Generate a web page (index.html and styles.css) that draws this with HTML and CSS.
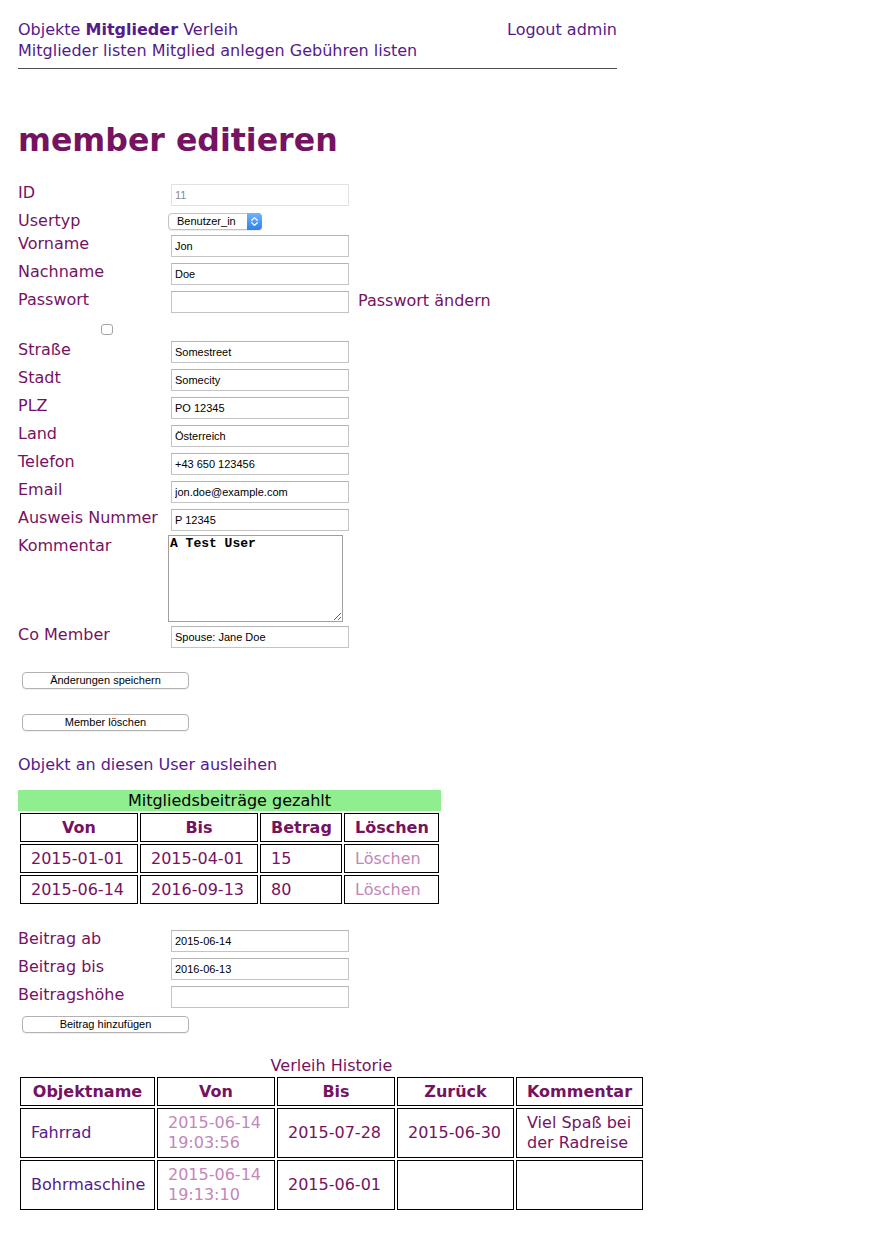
FILE: index.html
```html
<!DOCTYPE html>
<html lang="de">
<head>
<meta charset="utf-8">
<title>member editieren</title>
<link rel="stylesheet" href="styles.css">
</head>
<body>
<div class="page">
  <div class="topbar">
    <div class="nav-row">
      <div class="main-nav"><a href="#">Objekte</a> <a href="#" class="current">Mitglieder</a> <a href="#">Verleih</a></div>
      <a href="#">Logout admin</a>
    </div>
    <div class="sub-nav"><a href="#">Mitglieder listen</a> <a href="#">Mitglied anlegen</a> <a href="#">Gebühren listen</a></div>
  </div>

  <h1 class="title">member editieren</h1>

  <form class="member-form">
    <div class="row"><label>ID</label><input type="text" value="11" disabled class="field"></div>
    <div class="row row-select"><label>Usertyp</label>
      <span class="select">
        <select><option>Benutzer_in</option></select>
        <span class="select-btn"><svg width="15" height="17" viewBox="0 0 15 17"><path d="M4.8 7.2 L7.5 4.6 L10.2 7.2 M4.8 9.8 L7.5 12.4 L10.2 9.8" fill="none" stroke="#fff" stroke-width="1.3" stroke-linecap="round" stroke-linejoin="round"/></svg></span>
      </span>
    </div>
    <div class="row"><label>Vorname</label><input type="text" value="Jon" class="field"></div>
    <div class="row"><label>Nachname</label><input type="text" value="Doe" class="field"></div>
    <div class="row"><label>Passwort</label><input type="password" class="field"><span class="hint">Passwort ändern</span></div>
    <div class="row row-check"><input type="checkbox" class="check"></div>
    <div class="row"><label>Straße</label><input type="text" value="Somestreet" class="field"></div>
    <div class="row"><label>Stadt</label><input type="text" value="Somecity" class="field"></div>
    <div class="row"><label>PLZ</label><input type="text" value="PO 12345" class="field"></div>
    <div class="row"><label>Land</label><input type="text" value="Österreich" class="field"></div>
    <div class="row"><label>Telefon</label><input type="text" value="+43 650 123456" class="field"></div>
    <div class="row"><label>Email</label><input type="text" value="jon.doe@example.com" class="field"></div>
    <div class="row"><label>Ausweis Nummer</label><input type="text" value="P 12345" class="field"></div>
    <div class="row row-area"><label>Kommentar</label><textarea class="area">A Test User</textarea></div>
    <div class="row"><label>Co Member</label><input type="text" value="Spouse: Jane Doe" class="field"></div>
    <button type="button" class="btn btn-save">Änderungen speichern</button>
    <button type="button" class="btn btn-delete">Member löschen</button>
  </form>

  <a href="#" class="lend-link">Objekt an diesen User ausleihen</a>

  <table class="fees">
    <caption>Mitgliedsbeiträge gezahlt</caption>
    <tr><th class="c-von">Von</th><th class="c-bis">Bis</th><th class="c-betrag">Betrag</th><th class="c-del">Löschen</th></tr>
    <tr><td>2015-01-01</td><td>2015-04-01</td><td>15</td><td><a href="#" class="faint">Löschen</a></td></tr>
    <tr><td>2015-06-14</td><td>2016-09-13</td><td>80</td><td><a href="#" class="faint">Löschen</a></td></tr>
  </table>

  <form class="fee-form">
    <div class="row"><label>Beitrag ab</label><input type="text" value="2015-06-14" class="field"></div>
    <div class="row"><label>Beitrag bis</label><input type="text" value="2016-06-13" class="field"></div>
    <div class="row"><label>Beitragshöhe</label><input type="text" class="field"></div>
    <button type="button" class="btn btn-add">Beitrag hinzufügen</button>
  </form>

  <table class="history">
    <caption>Verleih Historie</caption>
    <tr><th class="h-obj">Objektname</th><th class="h-von">Von</th><th class="h-bis">Bis</th><th class="h-zur">Zurück</th><th class="h-kom">Kommentar</th></tr>
    <tr><td class="nw"><a href="#">Fahrrad</a></td><td><a href="#" class="faint">2015-06-14 19:03:56</a></td><td class="nw">2015-07-28</td><td class="nw">2015-06-30</td><td>Viel Spaß bei der Radreise</td></tr>
    <tr><td class="nw"><a href="#">Bohrmaschine</a></td><td><a href="#" class="faint">2015-06-14 19:13:10</a></td><td class="nw">2015-06-01</td><td></td><td></td></tr>
  </table>
</div>
</body>
</html>
```

FILE: styles.css
```css
html, body {
  margin: 0;
  padding: 0;
  background: #ffffff;
}

body {
  font-family: "DejaVu Sans", Verdana, sans-serif;
  font-size: 16px;
  line-height: 19px;
  color: #761262;
}

a {
  color: #551a8b;
  text-decoration: none;
}

.page {
  padding-left: 18px;
  padding-bottom: 40px;
}

/* header */
.topbar {
  width: 599px;
  padding-top: 19px;
  padding-bottom: 7px;
  border-bottom: 1px solid #505050;
  line-height: 21px;
}

.nav-row {
  display: flex;
  justify-content: space-between;
}

.main-nav .current {
  font-weight: bold;
}

.title {
  margin: 53px 0 24px;
  font-size: 31.6px;
  line-height: 37px;
  font-weight: bold;
  color: #761262;
}

/* form rows */
.member-form,
.fee-form {
  display: flex;
  flex-direction: column;
  align-items: flex-start;
}

.row {
  display: flex;
  align-items: flex-start;
  height: 28px;
}

.row label {
  width: 150px;
  flex: none;
  line-height: 19px;
}

.field {
  box-sizing: border-box;
  width: 178px;
  height: 22px;
  margin: 1px 0 0 3px;
  padding: 0 3px;
  border: 1px solid #c4c4c4;
  border-top-color: #b4b4b4;
  background: #fff;
  font-family: "Liberation Sans", Arial, sans-serif;
  font-size: 11px;
  color: #000;
  outline: none;
}

.field:disabled {
  border-color: #e2e2e2;
  color: #8a8a8a;
  background: #fff;
}

.hint {
  margin-left: 9px;
  margin-top: 1px;
  line-height: 19px;
}

.row-select {
  height: 23px;
}

.select {
  display: flex;
  box-sizing: border-box;
  width: 94px;
  height: 17px;
  margin-top: 2px;
  border: 1px solid #c2c2c2;
  border-radius: 4px;
  background: #fff;
  box-shadow: 0 1px 1px rgba(0, 0, 0, 0.08);
}

.select select {
  appearance: none;
  -webkit-appearance: none;
  flex: 1;
  min-width: 0;
  border: none;
  background: transparent;
  padding: 0 0 0 8px;
  margin: 0;
  font-family: "Liberation Sans", Arial, sans-serif;
  font-size: 11px;
  line-height: 15px;
  height: 15px;
  color: #000;
  outline: none;
}

.select-btn {
  display: flex;
  width: 15px;
  height: 17px;
  margin: -1px -1px -1px 0;
  border-radius: 0 4px 4px 0;
  background: linear-gradient(#6fb4fb, #2f80ea);
}

.row-check {
  height: 22px;
}

.check {
  appearance: none;
  -webkit-appearance: none;
  box-sizing: border-box;
  width: 12px;
  height: 11px;
  margin: 6px 0 0 83px;
  border: 1px solid #a4a4a4;
  border-radius: 3px;
  background: #fff;
}

.row-area {
  height: 89px;
}

.area {
  box-sizing: border-box;
  width: 175px;
  height: 87px;
  margin: -1px 0 0 0;
  padding: 0 1px;
  border: 1px solid #a0a0a0;
  font-family: "Liberation Mono", "Courier New", monospace;
  font-size: 13px;
  font-weight: bold;
  line-height: 15px;
  color: #000;
  background: #fff;
  resize: both;
}

.btn {
  box-sizing: border-box;
  width: 167px;
  height: 17px;
  margin-left: 4px;
  padding: 0;
  border: 1px solid #b2b2b2;
  border-radius: 4px;
  background: #fff;
  box-shadow: 0 1px 0 rgba(0, 0, 0, 0.06);
  font-family: "Liberation Sans", Arial, sans-serif;
  font-size: 11px;
  line-height: 15px;
  color: #000;
}

.btn-save {
  margin-top: 19px;
}

.btn-delete {
  margin-top: 25px;
}

.btn-add {
  margin-top: 3px;
}

.lend-link {
  display: block;
  width: max-content;
  margin-top: 24px;
  line-height: 19px;
}

/* tables */
table {
  border-collapse: separate;
  border-spacing: 2px;
  table-layout: fixed;
}

caption {
  line-height: 21px;
}

th,
td {
  border: 1px solid #000;
  padding: 4px 10px;
  line-height: 19px;
  text-align: left;
  color: #761262;
}

th {
  text-align: center;
  font-weight: bold;
  white-space: nowrap;
}

.faint {
  color: #c286b9;
}

.fees {
  width: 423px;
  margin-top: 16px;
}

.fees caption {
  background: #90ee90;
  color: #000;
}

.fees td {
  white-space: nowrap;
}

.c-von,
.c-bis {
  width: 96px;
}

.c-betrag {
  width: 60px;
}

.c-del {
  width: 73px;
}

.fee-form {
  margin-top: 23px;
}

.history {
  width: 627px;
  margin-top: 23px;
}

.history caption {
  line-height: 19px;
}

.history td {
  line-height: 20px;
}

.history .nw {
  white-space: nowrap;
}

.h-obj {
  width: 113px;
}

.h-von,
.h-bis {
  width: 96px;
}

.h-zur {
  width: 95px;
}

.h-kom {
  width: 105px;
}
```
